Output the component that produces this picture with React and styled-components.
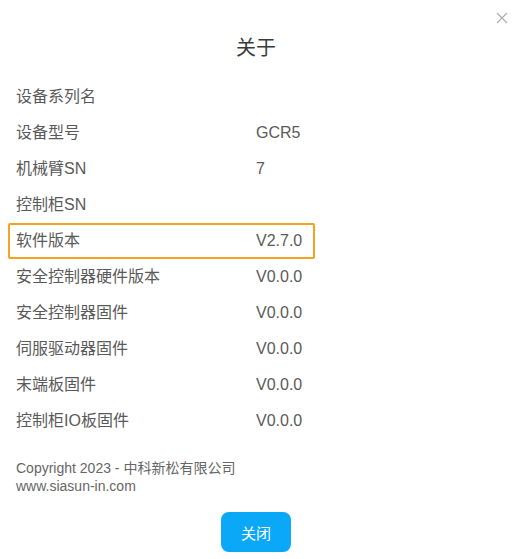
import React from "react";
import styled, { createGlobalStyle } from "styled-components";

const GlobalStyle = createGlobalStyle`
  html, body {
    margin: 0;
    padding: 0;
    background: #fff;
  }
  body {
    font-family: "Liberation Sans", "Noto Sans CJK SC", sans-serif;
  }
`;

const Dialog = styled.div`
  position: relative;
  width: 524px;
  height: 559px;
  box-sizing: border-box;
  padding: 0 20px 0 8px;
  background: #fff;
  display: flex;
  flex-direction: column;
`;

const CloseIcon = styled.button`
  position: absolute;
  top: 11px;
  right: 15px;
  width: 14px;
  height: 14px;
  padding: 0;
  border: none;
  background: none;
  cursor: pointer;
`;

const Title = styled.h2`
  margin: 0;
  height: 79px;
  box-sizing: border-box;
  padding-top: 36px;
  text-align: center;
  font-size: 20px;
  line-height: 24px;
  font-weight: normal;
  color: #3a3a3a;
`;

const List = styled.div`
  display: flex;
  flex-direction: column;
  width: 307px;
`;

const Row = styled.div`
  display: grid;
  grid-template-columns: 240px 1fr;
  align-items: center;
  height: 36px;
  box-sizing: border-box;
  padding-left: 6px;
  font-size: 16px;
  line-height: 20px;
  color: #5a5a5a;
  border: 2px solid ${(p) => (p.$active ? "#f5a21f" : "transparent")};
  border-radius: 2px;
`;

const Cell = styled.span`
  display: block;
  height: 20px;
  line-height: 20px;
`;

const Footer = styled.div`
  margin-top: 20px;
  padding-left: 8px;
  font-size: 14px;
  line-height: 18px;
  color: #666;
`;

const Actions = styled.div`
  display: flex;
  justify-content: center;
  margin-top: 17px;
`;

const Button = styled.button`
  width: 70px;
  height: 40px;
  border: none;
  border-radius: 8px;
  background: #0aa8f6;
  color: #fff;
  font-family: "Noto Sans CJK SC", sans-serif;
  font-size: 15px;
  cursor: pointer;
`;

const rows = [
  ["设备系列名", ""],
  ["设备型号", "GCR5"],
  ["机械臂SN", "7"],
  ["控制柜SN", ""],
  ["软件版本", "V2.7.0"],
  ["安全控制器硬件版本", "V0.0.0"],
  ["安全控制器固件", "V0.0.0"],
  ["伺服驱动器固件", "V0.0.0"],
  ["末端板固件", "V0.0.0"],
  ["控制柜IO板固件", "V0.0.0"],
];

const App = () => {
  return (
    <Dialog>
      <GlobalStyle />
      <CloseIcon aria-label="close">
        <svg width="14" height="14" viewBox="0 0 14 14">
          <path d="M2 2 L12 12 M12 2 L2 12" stroke="#aaa" strokeWidth="1.1" />
        </svg>
      </CloseIcon>
      <Title>关于</Title>
      <List>
        {rows.map(([label, value], i) => (
          <Row key={label} $active={i === 4}>
            <Cell>{label}</Cell>
            <Cell>{value}</Cell>
          </Row>
        ))}
      </List>
      <Footer>
        <div>Copyright 2023 - 中科新松有限公司</div>
        <div>www.siasun-in.com</div>
      </Footer>
      <Actions>
        <Button>关闭</Button>
      </Actions>
    </Dialog>
  );
};

export default App;
